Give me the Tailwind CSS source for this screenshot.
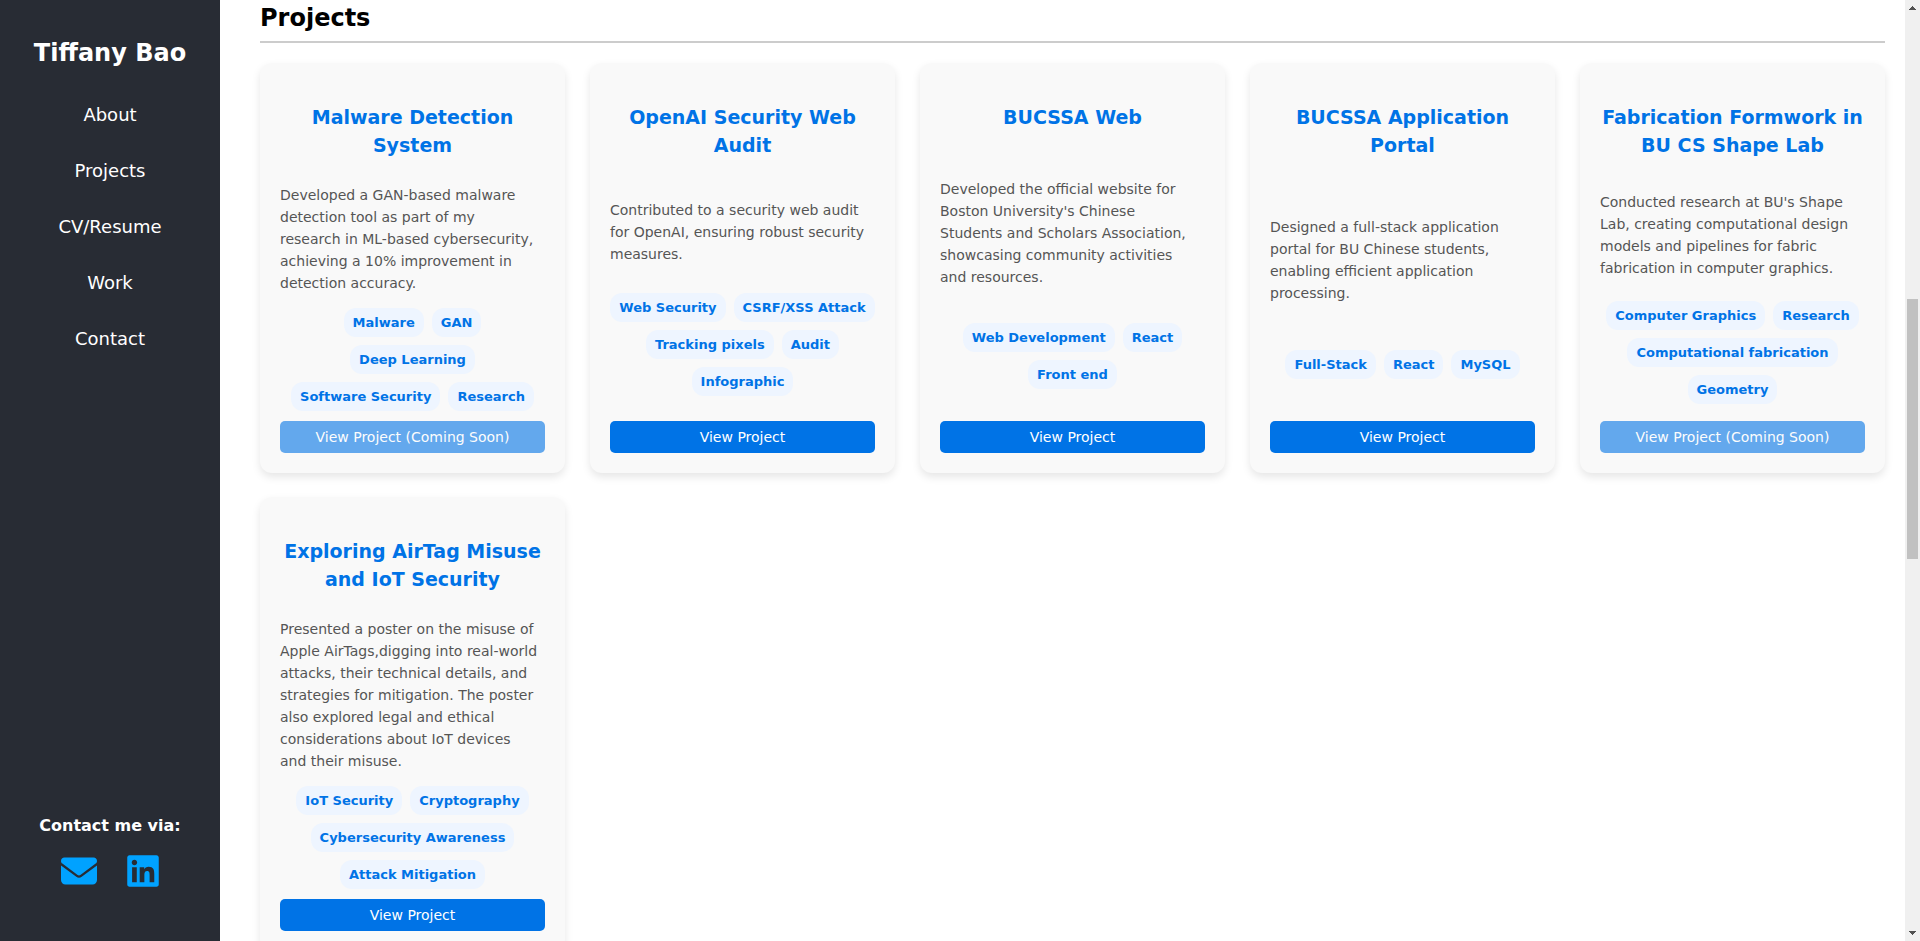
<!DOCTYPE html>
<html lang="en">
<head>
<meta charset="utf-8">
<meta name="viewport" content="width=device-width, initial-scale=1">
<title>Tiffany Bao</title>
<script src="https://cdn.jsdelivr.net/npm/@tailwindcss/browser@4"></script>
</head>
<body class="flex h-screen overflow-hidden bg-white font-['DejaVu_Sans',sans-serif] text-black">

<aside class="flex w-[220px] shrink-0 flex-col items-center justify-between bg-[#282c34] pt-[35px] pb-[52px] text-white">
  <div class="flex flex-col items-center">
    <h1 class="text-2xl leading-9 font-bold">Tiffany Bao</h1>
    <nav class="mt-[31px] flex flex-col items-center gap-[30px] text-[18px] leading-[26px]">
      <a href="#about">About</a>
      <a href="#projects">Projects</a>
      <a href="#cv">CV/Resume</a>
      <a href="#work">Work</a>
      <a href="#contact">Contact</a>
    </nav>
  </div>
  <div class="flex flex-col items-center gap-[15px]">
    <p class="text-base leading-6 font-bold">Contact me via:</p>
    <div class="flex items-center gap-[30px] text-[#00a2ff]">
      <a href="#email" aria-label="Email"><svg class="h-9 w-9" viewBox="0 0 512 512" fill="currentColor"><path d="M48 64C21.500 64 0 85.500 0 112c0 15.100 7.100 29.300 19.200 38.400L236.800 313.600c11.400 8.500 27 8.500 38.400 0L492.800 150.400c12.100-9.100 19.200-23.300 19.200-38.400c0-26.500-21.500-48-48-48H48zM0 176V384c0 35.300 28.700 64 64 64H448c35.300 0 64-28.700 64-64V176L294.400 339.200c-22.800 17.100-54 17.100-76.800 0L0 176z"/></svg></a>
      <a href="#linkedin" aria-label="LinkedIn"><svg class="h-9 w-8" viewBox="0 0 448 512" fill="currentColor"><path d="M416 32H31.900C14.300 32 0 46.500 0 64.300v383.400C0 465.500 14.300 480 31.900 480H416c17.600 0 32-14.500 32-32.300V64.300c0-17.800-14.400-32.300-32-32.300zM135.400 416H69V202.200h66.500V416zm-33.200-243c-21.300 0-38.500-17.300-38.500-38.500S80.900 96 102.200 96c21.200 0 38.500 17.300 38.500 38.500 0 21.300-17.200 38.500-38.500 38.500zm282.100 243h-66.400V312c0-24.800-.5-56.700-34.500-56.700-34.600 0-39.900 27-39.900 54.900V416h-66.400V202.200h63.700v29.200h.9c8.900-16.800 30.600-34.500 62.900-34.500 67.200 0 79.700 44.300 79.700 101.900V416z"/></svg></a>
    </div>
  </div>
</aside>

<main class="min-w-0 flex-1 overflow-hidden pr-5 pl-10">
  <h2 id="projects" class="border-b-2 border-[#ccc] pb-[5px] text-2xl leading-9 font-bold">Projects</h2>
  <div class="mt-5 grid grid-cols-5 gap-x-[25px] gap-y-6">

    <article class="flex flex-col justify-between rounded-xl bg-[#f9f9f9] p-5 shadow-[0_4px_8px_rgba(0,0,0,0.1)]">
      <h3 class="mt-5 mb-[25px] text-center text-[19px] leading-7 font-bold text-[#0073e6]">Malware Detection System</h3>
      <p class="mb-[14px] pr-[6px] text-[14px] leading-[22px] text-[#555]">Developed a GAN-based malware detection tool as part of my research in ML-based cybersecurity, achieving a 10% improvement in detection accuracy.</p>
      <ul class="mb-[10px] flex flex-wrap justify-center gap-2 text-[13px] leading-[19px] font-bold text-[#0073e6]">
        <li class="rounded-xl bg-[#eef5ff] px-[9px] py-[5px]">Malware</li>
        <li class="rounded-xl bg-[#eef5ff] px-[9px] py-[5px]">GAN</li>
        <li class="rounded-xl bg-[#eef5ff] px-[9px] py-[5px]">Deep Learning</li>
        <li class="rounded-xl bg-[#eef5ff] px-[9px] py-[5px]">Software Security</li>
        <li class="rounded-xl bg-[#eef5ff] px-[9px] py-[5px]">Research</li>
      </ul>
      <button type="button" disabled class="h-8 w-full shrink-0 rounded-[5px] bg-[#0073e6] text-center text-[14px] leading-8 text-white opacity-60">View Project (Coming Soon)</button>
    </article>

    <article class="flex flex-col justify-between rounded-xl bg-[#f9f9f9] p-5 shadow-[0_4px_8px_rgba(0,0,0,0.1)]">
      <h3 class="mt-5 mb-[25px] text-center text-[19px] leading-7 font-bold text-[#0073e6]">OpenAI Security Web Audit</h3>
      <p class="mb-[14px] pr-[6px] text-[14px] leading-[22px] text-[#555]">Contributed to a security web audit for OpenAI, ensuring robust security measures.</p>
      <ul class="mb-[10px] flex flex-wrap justify-center gap-2 text-[13px] leading-[19px] font-bold text-[#0073e6]">
        <li class="rounded-xl bg-[#eef5ff] px-[9px] py-[5px]">Web Security</li>
        <li class="rounded-xl bg-[#eef5ff] px-[9px] py-[5px]">CSRF/XSS Attack</li>
        <li class="rounded-xl bg-[#eef5ff] px-[9px] py-[5px]">Tracking pixels</li>
        <li class="rounded-xl bg-[#eef5ff] px-[9px] py-[5px]">Audit</li>
        <li class="rounded-xl bg-[#eef5ff] px-[9px] py-[5px]">Infographic</li>
      </ul>
      <a href="#openai-audit" class="block h-8 w-full shrink-0 rounded-[5px] bg-[#0073e6] text-center text-[14px] leading-8 text-white">View Project</a>
    </article>

    <article class="flex flex-col justify-between rounded-xl bg-[#f9f9f9] p-5 shadow-[0_4px_8px_rgba(0,0,0,0.1)]">
      <h3 class="mt-5 mb-[25px] text-center text-[19px] leading-7 font-bold text-[#0073e6]">BUCSSA Web</h3>
      <p class="mb-[14px] pr-[6px] text-[14px] leading-[22px] text-[#555]">Developed the official website for Boston University's Chinese Students and Scholars Association, showcasing community activities and resources.</p>
      <ul class="mb-[10px] flex flex-wrap justify-center gap-2 text-[13px] leading-[19px] font-bold text-[#0073e6]">
        <li class="rounded-xl bg-[#eef5ff] px-[9px] py-[5px]">Web Development</li>
        <li class="rounded-xl bg-[#eef5ff] px-[9px] py-[5px]">React</li>
        <li class="rounded-xl bg-[#eef5ff] px-[9px] py-[5px]">Front end</li>
      </ul>
      <a href="#bucssa-web" class="block h-8 w-full shrink-0 rounded-[5px] bg-[#0073e6] text-center text-[14px] leading-8 text-white">View Project</a>
    </article>

    <article class="flex flex-col justify-between rounded-xl bg-[#f9f9f9] p-5 shadow-[0_4px_8px_rgba(0,0,0,0.1)]">
      <h3 class="mt-5 mb-[25px] text-center text-[19px] leading-7 font-bold text-[#0073e6]">BUCSSA Application Portal</h3>
      <p class="mb-[14px] pr-[6px] text-[14px] leading-[22px] text-[#555]">Designed a full-stack application portal for BU Chinese students, enabling efficient application processing.</p>
      <ul class="mb-[10px] flex flex-wrap justify-center gap-2 text-[13px] leading-[19px] font-bold text-[#0073e6]">
        <li class="rounded-xl bg-[#eef5ff] px-[9px] py-[5px]">Full-Stack</li>
        <li class="rounded-xl bg-[#eef5ff] px-[9px] py-[5px]">React</li>
        <li class="rounded-xl bg-[#eef5ff] px-[9px] py-[5px]">MySQL</li>
      </ul>
      <a href="#bucssa-portal" class="block h-8 w-full shrink-0 rounded-[5px] bg-[#0073e6] text-center text-[14px] leading-8 text-white">View Project</a>
    </article>

    <article class="flex flex-col justify-between rounded-xl bg-[#f9f9f9] p-5 shadow-[0_4px_8px_rgba(0,0,0,0.1)]">
      <h3 class="mt-5 mb-[25px] text-center text-[19px] leading-7 font-bold text-[#0073e6]">Fabrication Formwork in BU CS Shape Lab</h3>
      <p class="mb-[14px] pr-[6px] text-[14px] leading-[22px] text-[#555]">Conducted research at BU's Shape Lab, creating computational design models and pipelines for fabric fabrication in computer graphics.</p>
      <ul class="mb-[10px] flex flex-wrap justify-center gap-2 text-[13px] leading-[19px] font-bold text-[#0073e6]">
        <li class="rounded-xl bg-[#eef5ff] px-[9px] py-[5px]">Computer Graphics</li>
        <li class="rounded-xl bg-[#eef5ff] px-[9px] py-[5px]">Research</li>
        <li class="rounded-xl bg-[#eef5ff] px-[9px] py-[5px]">Computational fabrication</li>
        <li class="rounded-xl bg-[#eef5ff] px-[9px] py-[5px]">Geometry</li>
      </ul>
      <button type="button" disabled class="h-8 w-full shrink-0 rounded-[5px] bg-[#0073e6] text-center text-[14px] leading-8 text-white opacity-60">View Project (Coming Soon)</button>
    </article>

    <article class="flex flex-col justify-between rounded-xl bg-[#f9f9f9] p-5 shadow-[0_4px_8px_rgba(0,0,0,0.1)]">
      <h3 class="mt-5 mb-[25px] text-center text-[19px] leading-7 font-bold text-[#0073e6]">Exploring AirTag Misuse and IoT Security</h3>
      <p class="mb-[14px] pr-[6px] text-[14px] leading-[22px] text-[#555]">Presented a poster on the misuse of Apple AirTags,digging into real-world attacks, their technical details, and strategies for mitigation. The poster also explored legal and ethical considerations about IoT devices and their misuse.</p>
      <ul class="mb-[10px] flex flex-wrap justify-center gap-2 text-[13px] leading-[19px] font-bold text-[#0073e6]">
        <li class="rounded-xl bg-[#eef5ff] px-[9px] py-[5px]">IoT Security</li>
        <li class="rounded-xl bg-[#eef5ff] px-[9px] py-[5px]">Cryptography</li>
        <li class="rounded-xl bg-[#eef5ff] px-[9px] py-[5px]">Cybersecurity Awareness</li>
        <li class="rounded-xl bg-[#eef5ff] px-[9px] py-[5px]">Attack Mitigation</li>
      </ul>
      <a href="#airtag" class="block h-8 w-full shrink-0 rounded-[5px] bg-[#0073e6] text-center text-[14px] leading-8 text-white">View Project</a>
    </article>

  </div>
</main>

<!-- Page scrollbar -->
<div class="flex w-[15px] shrink-0 flex-col items-center bg-[#f0f0f0] py-[6px]" aria-hidden="true">
  <svg class="h-1 w-[7px] shrink-0" viewBox="0 0 7 4" fill="#505050" shape-rendering="crispEdges"><path d="M3 0h1v1h1v1h1v1h1v1H0V3h1V2h1V1h1z"/></svg>
  <div class="flex w-full flex-1 flex-col items-center">
    <div class="flex-[289]"></div>
    <div class="w-[11px] flex-[260] bg-[#c1c1c1]"></div>
    <div class="flex-[372]"></div>
  </div>
  <svg class="h-1 w-[7px] shrink-0" viewBox="0 0 7 4" fill="#505050" shape-rendering="crispEdges"><path d="M0 0h7v1H6v1H5v1H4v1H3V3H2V2H1V1H0z"/></svg>
</div>

</body>
</html>
